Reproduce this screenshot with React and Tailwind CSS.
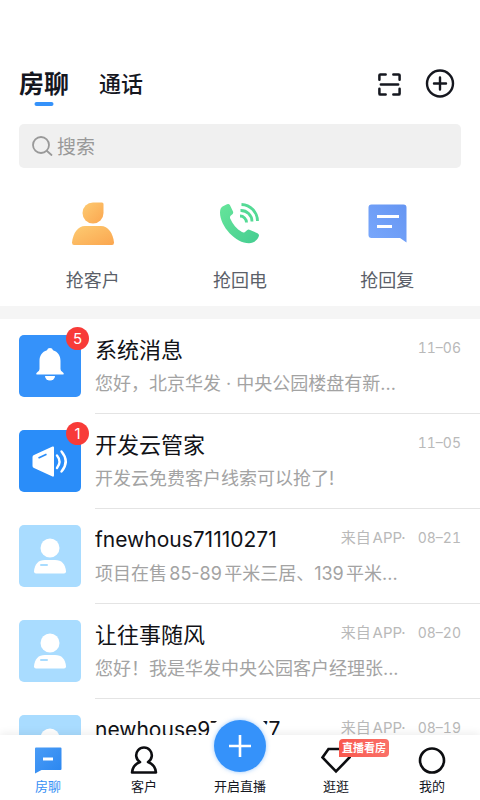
import React, { useState } from 'react';

// Shortcuts shown under the search box
const SHORTCUTS = [
    { label: '抢客户', Icon: CustomerIcon },
    { label: '抢回电', Icon: CallbackIcon },
    { label: '抢回复', Icon: ReplyIcon },
];

// isAccount marks chats that are titled by a raw account id
const CHATS = [
    { name: '系统消息', preview: '您好，北京华发 · 中央公园楼盘有新...', date: '11–06', unread: 5, type: 'system' },
    { name: '开发云管家', preview: '开发云免费客户线索可以抢了!', date: '11–05', unread: 1, type: 'steward' },
    { name: 'fnewhous71110271', preview: '项目在售85-89平米三居、139平米...', date: '08–21', source: '来自APP·', isAccount: true },
    { name: '让往事随风', preview: '您好！我是华发中央公园客户经理张...', date: '08–20', source: '来自APP·' },
    { name: 'newhouse9710277', preview: '您好！', date: '08–19', source: '来自APP·', isAccount: true },
];

function ScanIcon() {
    return (
        <svg width="25" height="25" viewBox="0 0 26 26" fill="none" stroke="#15171f" strokeWidth="2.6" strokeLinecap="round" strokeLinejoin="round">
            <path d="M2.500 8V3.500Q2.500 2.500 3.500 2.500H9M17 2.500h5.500Q23.500 2.500 23.500 3.500V8M2.500 17.500v5Q2.500 23.500 3.500 23.500H9M17 23.500h5.500Q23.500 23.500 23.500 22.500V17.500M4 13H22" />
        </svg>
    );
}

function AddIcon() {
    return (
        <svg width="30" height="30" viewBox="0 0 30 30" fill="none" stroke="#15171f" strokeWidth="2.4" strokeLinecap="round">
            <circle cx="15" cy="14.500" r="13" />
            <path d="M15 8.500v12M9 14.500h12" />
        </svg>
    );
}

function SearchIcon() {
    return (
        <svg width="22" height="22" viewBox="0 0 22 22" fill="none" stroke="#999" strokeWidth="1.8" strokeLinecap="round">
            <circle cx="10" cy="10" r="8" />
            <path d="M16 16l4.500 4" />
        </svg>
    );
}

function CustomerIcon() {
    return (
        <svg width="44" height="44" viewBox="0 0 44 44">
            <defs>
                <linearGradient id="customer" x1="0" y1="0" x2="1" y2="1">
                    <stop offset="0" stopColor="#fdcb72" />
                    <stop offset="1" stopColor="#fba64f" />
                </linearGradient>
            </defs>
            <path fill="url(#customer)" d="M22 1.500h9Q32.500 1.500 32.500 3v9A10.500 10.500 0 1 1 22 1.500z" />
            <path fill="url(#customer)" d="M14 25h16c7 0 12 7 13 16.500q0 2.500-2 2.500H3q-2 0-2-2.500C2 32 7 25 14 25z" />
        </svg>
    );
}

function CallbackIcon() {
    return (
        <svg width="44" height="44" viewBox="0 0 44 44">
            <defs>
                <linearGradient id="callback" x1="0" y1="0" x2="1" y2="1">
                    <stop offset="0" stopColor="#66e59a" />
                    <stop offset="1" stopColor="#45cd91" />
                </linearGradient>
            </defs>
            <path
                fill="url(#callback)"
                d="M4.500 5.500L9 3.300q2-.8 3 1L15 10.500q.6 1.500-.6 2.700l-1.800 1.600q-1 1.200-.4 2.600c2.400 5.600 6.300 10.400 11.800 13.700q1.600.9 3-.2l2-1.700q1.400-1 3-.3l7.500 3.400q2 1 1.300 3c-1.300 4-5.300 7-9.800 7C18 42.300 2 25.500 2 11.500q0-4.500 2.500-6z"
            />
            <g fill="none" stroke="#54da95" strokeWidth="2.800">
                <path d="M23.500 3.500A16.500 16.500 0 0 1 39.500 20" />
                <path d="M22.500 9.500A11 11 0 0 1 34 20.500" />
                <path d="M22 15A6.500 6.500 0 0 1 28.500 21.500" />
            </g>
        </svg>
    );
}

function ReplyIcon() {
    return (
        <svg width="44" height="44" viewBox="0 0 44 44">
            <defs>
                <linearGradient id="reply" x1="0" y1="1" x2="1" y2="0">
                    <stop offset="0" stopColor="#79a8fc" />
                    <stop offset="1" stopColor="#6595f2" />
                </linearGradient>
            </defs>
            <path fill="url(#reply)" d="M6.500 3.500h32q3 0 3 3v35l-6.500-4.500H6.500q-3 0-3-3v-27.500q0-3 3-3z" />
            <path stroke="#fff" strokeWidth="3.200" d="M12 15.500h22M12 25.500h15" />
        </svg>
    );
}

function BellIcon() {
    return (
        <svg width="62" height="62" viewBox="0 0 62 62" fill="#fff">
            <path d="M31 13q2.500 0 3 2.300c5 1.500 7.500 5.500 7.500 10.700v8q0 2 2 3t1 2.500h-27q-1-1.500 1-2.500t2-3v-8c0-5.200 2.500-9.200 7.500-10.700q.5-2.300 3-2.300z" />
            <path d="M26 41h10a5 4.500 0 0 1-10 0z" />
        </svg>
    );
}

function SpeakerIcon() {
    return (
        <svg width="62" height="62" viewBox="0 0 62 62" fill="none">
            <path fill="#fff" d="M15 25l18.500-8.500q1.500-.5 1.500 1v28q0 1.500-1.500 1L15 38q-1.500-.5-1.500-2v-9q0-1.500 1.500-2z" />
            <path stroke="#2a8df9" strokeWidth="1.800" d="M19.500 28l8-3.700" />
            <g stroke="#fff" strokeWidth="2.400" strokeLinecap="round">
                <path d="M38 25.500q5 6 0 12.500" />
                <path d="M42.500 21.500q8.500 10 0 20" />
            </g>
        </svg>
    );
}

function PersonIcon() {
    return (
        <svg width="62" height="62" viewBox="0 0 62 62">
            <circle cx="31" cy="23" r="9.500" fill="#fff" />
            <path fill="#fff" d="M26 35h10q10 0 11 11.500 0 2-2 2H17q-2 0-2-2Q16 35 26 35z" />
            <path stroke="#a9dcff" strokeWidth="2" strokeLinecap="round" d="M22 40h6" />
        </svg>
    );
}

function ChatTabIcon() {
    return (
        <svg width="30" height="28" viewBox="0 0 30 28">
            <defs>
                <linearGradient id="chatTab" x1="0" y1="0" x2="1" y2="1">
                    <stop offset="0" stopColor="#4a9cf6" />
                    <stop offset="1" stopColor="#2a86f0" />
                </linearGradient>
            </defs>
            <path fill="url(#chatTab)" d="M3 1.500h24.500q1 0 1 1V23q0 1-1 1H8.500L2 27.500V2.500q0-1 1-1z" />
            <path stroke="#fff" strokeWidth="3" d="M10 13h10" />
        </svg>
    );
}

function CustomerTabIcon() {
    return (
        <svg width="30" height="28" viewBox="0 0 30 28" fill="none" stroke="#0c0d10" strokeWidth="2.600" strokeLinejoin="round">
            <path d="M11 16A7.800 7.800 0 1 1 19 16C23 17.500 26.500 21 27 26.500H3C3.500 21 7 17.500 11 16z" />
        </svg>
    );
}

function DiamondTabIcon() {
    return (
        <svg width="30" height="28" viewBox="0 0 30 28" fill="none" stroke="#0c0d10" strokeWidth="2.600">
            <path d="M7.500 3h15l6 8.500L15 25.500 1.500 11.500z" />
        </svg>
    );
}

function MineTabIcon() {
    return (
        <svg width="30" height="28" viewBox="0 0 30 28" fill="none" stroke="#0c0d10" strokeWidth="2.600">
            <circle cx="15" cy="14.500" r="12" />
        </svg>
    );
}

function Avatar({ type, unread }) {
    return (
        <div className="relative shrink-0">
            {type === 'system' && <div className="rounded-[5px] bg-[#3592fa] overflow-hidden"><BellIcon /></div>}
            {type === 'steward' && <div className="rounded-[5px] bg-[#2a8df9] overflow-hidden"><SpeakerIcon /></div>}
            {!type && <div className="rounded-[5px] bg-[#a9dcff] overflow-hidden"><PersonIcon /></div>}
            {unread && (
                <span className="absolute -top-2 -right-2 w-[23px] h-[23px] rounded-full bg-[#f83b38] text-white text-[15px] leading-[23px] text-center">
                    {unread}
                </span>
            )}
        </div>
    );
}

function ChatRow({ chat }) {
    return (
        <li className="flex h-[95px] pl-[19px] gap-[14px]">
            <div className="pt-4">
                <Avatar type={chat.type} unread={chat.unread} />
            </div>
            <div className="flex-1 min-w-0 border-b border-[#e4e4e4] pt-[14px] pr-[19px]">
                <div className="flex justify-between">
                    <h2
                        className={
                            chat.isAccount
                                ? 'text-[21px] leading-[34px] text-[#111217] truncate'
                                : 'text-[22px] leading-[34px] text-[#111217] truncate'
                        }
                    >
                        {chat.name}
                    </h2>
                    <p className="shrink-0 flex gap-3 leading-[30px] text-[#b9b9b9] tabular-nums [text-autospace:normal]">
                        {chat.source && <span className="text-[15px]">{chat.source}</span>}
                        <time className="text-[14px]">{chat.date}</time>
                    </p>
                </div>
                <p className="text-[18px] leading-[33px] text-[#a3a3a3] truncate [text-autospace:normal]">{chat.preview}</p>
            </div>
        </li>
    );
}

function TabButton({ label, active, onClick, children }) {
    return (
        <button
            onClick={onClick}
            className={active ? 'relative flex flex-col items-center text-[#368ff5]' : 'relative flex flex-col items-center text-[#15171f]'}
        >
            {children}
            <span className="mt-[2px] text-[13px] leading-[20px]">{label}</span>
        </button>
    );
}

function App() {
    const [tab, setTab] = useState('chat');

    return (
        <div className="h-screen flex flex-col bg-white font-['Inter','Noto_Sans_CJK_SC',sans-serif]">
            {/* Header */}
            <header className="pt-[64px] px-[19px]">
                <div className="flex items-center justify-between h-[40px]">
                    <div className="flex items-center gap-[30px] text-[#15171f]">
                        <button className="relative text-[25px] leading-[40px] font-bold">
                            房聊
                            <span className="absolute left-1/2 -translate-x-1/2 bottom-[-2px] w-[19px] h-1 rounded-full bg-[#3592fa]" />
                        </button>
                        <button className="text-[22px] leading-[40px] font-medium">通话</button>
                    </div>
                    <div className="flex items-center gap-[23px] pr-[6px]">
                        <button aria-label="扫一扫"><ScanIcon /></button>
                        <button aria-label="添加"><AddIcon /></button>
                    </div>
                </div>
                <label className="mt-[20px] flex items-center gap-1 h-[44px] px-3 rounded-[5px] bg-[#f0f0f0]">
                    <SearchIcon />
                    <input
                        type="search"
                        aria-label="搜索"
                        placeholder="搜索"
                        className="flex-1 min-w-0 pt-[3px] bg-transparent text-[19px] leading-[28px] outline-none placeholder:text-[#999]"
                    />
                </label>
            </header>

            {/* Shortcuts */}
            <section className="grid grid-cols-3 px-[19px] pt-[33px] pb-[9px]">
                {SHORTCUTS.map(({ label, Icon }) => (
                    <button key={label} className="flex flex-col items-center gap-[20px] text-[18px] leading-[32px] text-[#5b5f69]">
                        <Icon />
                        {label}
                    </button>
                ))}
            </section>
            <div className="h-[13px] shrink-0 bg-[#f5f5f5]" />

            {/* Conversations */}
            <ul className="flex-1 min-h-0 overflow-y-auto [scrollbar-width:none]">
                {CHATS.map((chat) => (
                    <ChatRow key={chat.name} chat={chat} />
                ))}
            </ul>

            {/* Bottom tabs */}
            <nav className="relative grid grid-cols-5 h-[65px] shrink-0 pt-[11px] bg-white shadow-[0_-2px_8px_rgba(0,0,0,0.07)]">
                <TabButton label="房聊" active={tab === 'chat'} onClick={() => setTab('chat')}>
                    <ChatTabIcon />
                </TabButton>
                <TabButton label="客户" active={tab === 'customer'} onClick={() => setTab('customer')}>
                    <CustomerTabIcon />
                </TabButton>
                <button className="relative flex flex-col items-center justify-end pb-1 text-[13px] leading-[20px] text-[#15171f]">
                    {/* Live button rises above the bar */}
                    <span className="absolute top-[-34px] left-1/2 -translate-x-1/2 flex items-center justify-center w-[68px] h-[68px] rounded-full bg-white">
                        <span className="flex items-center justify-center w-[52px] h-[52px] rounded-full bg-[#3592fa] shadow-[0_0_4px_rgba(53,146,250,0.5)]">
                            <svg width="24" height="24" viewBox="0 0 24 24" stroke="#fff" strokeWidth="2.600">
                                <path d="M12 1v22M1 12h22" />
                            </svg>
                        </span>
                    </span>
                    <span className="relative">开启直播</span>
                </button>
                <TabButton label="逛逛" active={tab === 'explore'} onClick={() => setTab('explore')}>
                    <DiamondTabIcon />
                    <span className="absolute top-[-7px] left-[51px] w-[50px] rounded-[4px] rounded-bl-none bg-linear-to-r from-[#f9584e] to-[#fa7068] text-white text-[11px] leading-[18px] font-bold text-center whitespace-nowrap">
                        直播看房
                    </span>
                </TabButton>
                <TabButton label="我的" active={tab === 'mine'} onClick={() => setTab('mine')}>
                    <MineTabIcon />
                </TabButton>
            </nav>
        </div>
    );
}

export default App;
